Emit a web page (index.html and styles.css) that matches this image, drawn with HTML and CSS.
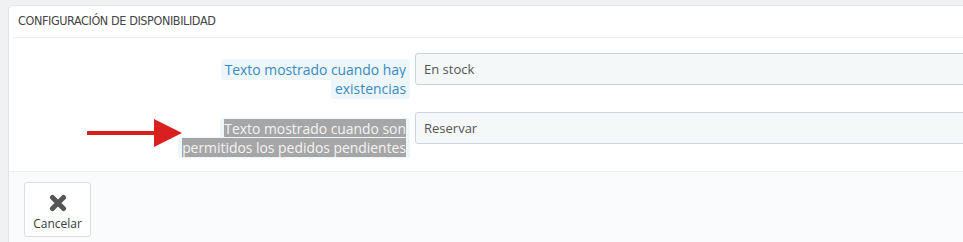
FILE: index.html
```html
<!DOCTYPE html>
<html lang="es">

<head>
    <meta charset="UTF-8">
    <meta name="viewport" content="width=device-width, initial-scale=1.0">
    <title>Configuración de disponibilidad</title>
    <link rel="stylesheet" href="styles.css">
</head>

<body>
    <div class="panel">
        <div class="panel-heading">Configuración de disponibilidad</div>

        <div class="form-body">
            <div class="form-group">
                <label class="control-label" for="available_now">
                    <span class="label-tooltip">Texto mostrado cuando hay existencias</span>
                </label>
                <div class="field">
                    <input type="text" id="available_now" value="En stock">
                </div>
            </div>

            <div class="form-group">
                <label class="control-label" for="available_later">
                    <span class="label-tooltip"><span class="selected">Texto mostrado cuando son permitidos los pedidos pendientes</span></span>
                </label>
                <div class="field">
                    <input type="text" id="available_later" value="Reservar">
                </div>
            </div>
        </div>

        <div class="panel-footer">
            <button type="button" class="btn-cancel">
                <svg class="icon" viewBox="0 0 18 18" width="18" height="18">
                    <path d="M3.5 3.5 L14.5 14.5 M14.5 3.5 L3.5 14.5" stroke="#555" stroke-width="5" stroke-linecap="round" fill="none"/>
                </svg>
                <span>Cancelar</span>
            </button>
        </div>
    </div>

    <!-- red arrow pointing to the selected label -->
    <svg class="arrow" width="100" height="32" viewBox="0 0 100 32">
        <rect x="0" y="14" width="69" height="4" fill="#d9201f"/>
        <polygon points="67,2 95,16 67,30" fill="#d9201f"/>
    </svg>
</body>

</html>
```

FILE: styles.css
```css
html,
body {
    overflow: hidden;
}

body {
    font-family: "Open Sans", Arial, sans-serif;
    font-size: 13px;
    margin: 0;
    padding: 5px 0 0 8px;
    background-color: #eff1f2;
    color: #555;
    position: relative;
}

.panel {
    width: 1100px;
    background-color: #fff;
    border: 1px solid #e2e4e6;
    border-radius: 5px 0 0 0;
}

.panel-heading {
    font-family: "DejaVu Sans Condensed", "Liberation Sans", sans-serif;
    font-size: 12.5px;
    text-transform: uppercase;
    color: #454545;
    letter-spacing: -0.4px;
    margin-left: 4px;
    padding: 0 5px;
    height: 31px;
    line-height: 30px;
    border-bottom: 1px solid #eee;
}

.form-body {
    padding: 15px 0 14px 0;
}

.form-group {
    display: flex;
    gap: 5px;
    margin-bottom: 14px;
}

.form-group:last-child {
    margin-bottom: 0;
}

.control-label {
    width: 244px;
    margin-left: 157px;
    flex: none;
    text-align: right;
    padding-top: 7px;
    line-height: 19px;
    font-size: 13.9px;
}

.label-tooltip {
    background-color: #edf6fb;
    color: #3a8bc0;
    padding: 1px 4px;
    border-radius: 3px;
    box-decoration-break: clone;
    -webkit-box-decoration-break: clone;
}

.selected {
    background-color: #a6a6a6;
    color: #f4f4f4;
}

.field {
    flex: 1;
}

.field input {
    width: 100%;
    box-sizing: border-box;
    height: 32px;
    padding: 0 8px;
    font-family: "Open Sans", Arial, sans-serif;
    font-size: 13px;
    color: #555;
    background-color: #f5f8f9;
    border: 1px solid #c7d6db;
    border-radius: 3px;
}

.panel-footer {
    background-color: #fafbfc;
    border-top: 1px solid #eee;
    padding: 10px 15px 10px 15px;
    height: 60px;
}

.btn-cancel {
    display: flex;
    flex-direction: column;
    align-items: center;
    width: 67px;
    height: 55px;
    padding: 11px 0 0 0;
    background-color: #fff;
    border: 1px solid #ddd;
    border-radius: 3px;
    font-family: "Open Sans", Arial, sans-serif;
    font-size: 12px;
    color: #363a41;
    cursor: pointer;
}

.btn-cancel .icon {
    display: block;
    margin-bottom: 3px;
}

.arrow {
    position: absolute;
    left: 87px;
    top: 117px;
}
```
